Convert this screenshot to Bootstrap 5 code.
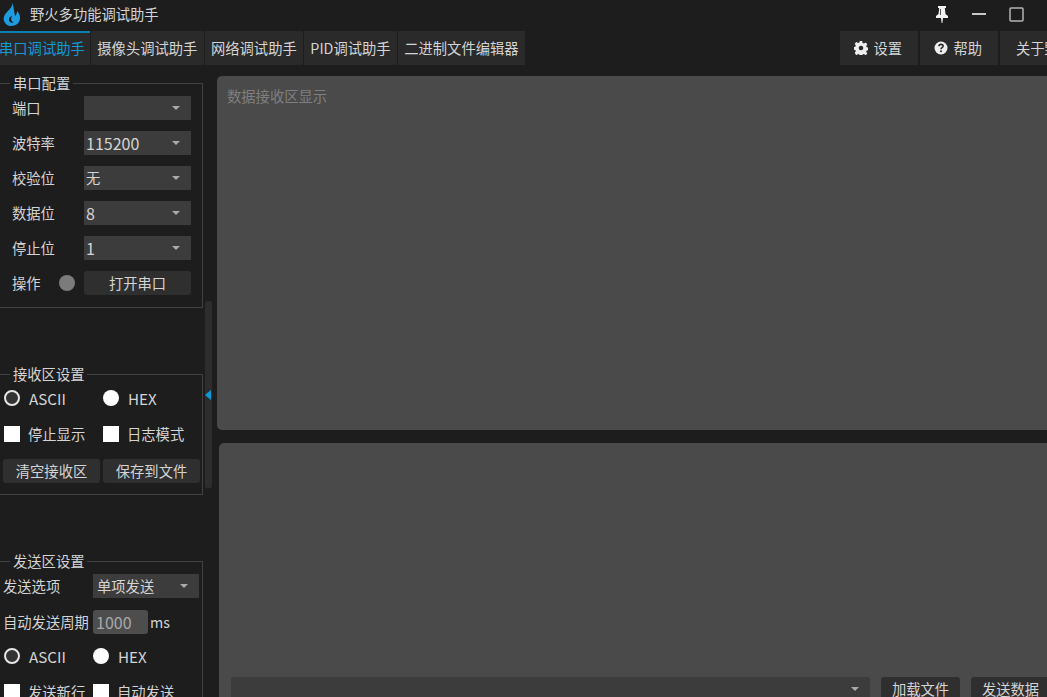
<!DOCTYPE html>
<html lang="zh-CN">
<head>
    <meta charset="UTF-8">
    <meta name="viewport" content="width=device-width, initial-scale=1.0">
    <title>野火多功能调试助手</title>
    <link href="https://cdn.jsdelivr.net/npm/bootstrap@5.3.0/dist/css/bootstrap.min.css" rel="stylesheet">
    <style>
        html, body { height: 100%; overflow: hidden; }
        body { background: #1d1d1d; color: #d4d4d4; font-family: "Noto Sans CJK SC", "Noto Sans", sans-serif; font-size: 14.3px; line-height: 20px; }
        .app-shell { width: 1047px; height: 697px; overflow: hidden; }
        .title-bar { height: 31px; padding: 0 0 3px 2px; flex: none; }
        .app-name { margin-left: 9px; }
        .win-btns { gap: 22px; padding-right: 23px; }
        .tab-bar { height: 34px; gap: 1px; flex: none; }
        .tab-item { background: #2a2a2a; height: 34px; padding: 0 6.3px; white-space: nowrap; display: flex; align-items: center; flex: none; }
        .tab-on { color: #0f9ad6; width: 90px; padding-left: 0; text-indent: -1px; border-top: 2px solid #0b80b4; padding-bottom: 2px; }
        .tab-tool { width: 78px; padding-left: 13.5px; gap: 6px; margin-left: 1px; }
        .tab-last { width: 90px; padding-left: 16px; margin-left: 1px; margin-right: -43px; }
        .side-pane { width: 217px; flex: none; position: relative; padding-top: 9px; }
        .grp { width: 204px; margin-left: -1px; border: 1px solid #414141; padding: 0; min-width: 0; }
        .grp legend { float: none; width: auto; font-size: 14.3px; padding: 0 3px; line-height: 18px; margin-bottom: -2px; }
        .grp-port { height: 234px; margin-bottom: 57px; padding: 0 11px 0 12px; }
        .grp-port legend { margin-left: -2px; margin-bottom: -1.5px; }
        .grp-recv { height: 130px; margin-bottom: 57px; padding: 0 3px 0 4px; }
        .grp-recv legend { margin-left: 6px; }
        .grp-send { height: 150px; padding: 0 3px 0 3px; }
        .grp-send legend { margin-left: 7px; }
        .field-row { height: 35px; }
        .tall-row { height: 36px; }
        .lift-one { margin-top: -1px; }
        .lift-two { margin-top: -2px; }
        .drop-one { margin-top: 1px; }
        .field-label { width: 72px; flex: none; }
        .combo { background: #3c3c3c; height: 24px; padding: 0 11px 0 2px; display: flex; align-items: center; flex: 1; }
        .combo::after { content: ""; border-left: 4px solid transparent; border-right: 4px solid transparent; border-top: 4px solid #aaa; flex: none; margin-left: auto; }
        .combo-wide { padding-left: 4px; }
        .num-text { font-size: 16px; }
        .word-text { font-size: 15.2px; }
        .led { width: 16px; height: 16px; border-radius: 50%; background: #7b7b7b; margin: 0 9px 0 -25px; flex: none; }
        .tool-btn { background: #2f2f2f; color: #d4d4d4; height: 24px; border-radius: 3px; display: flex; align-items: center; justify-content: center; flex: none; }
        .recv-btns { gap: 3px; margin: 7px 0 0 -1px; }
        .recv-btn { width: 97px; }
        .send-btn { width: 79px; }
        .radio-dot { width: 16px; height: 16px; border-radius: 50%; background: #fff; flex: none; margin-right: 9px; }
        .radio-on { background: #333; border: 2px solid #e6e6e6; }
        .check-box { width: 16px; height: 16px; background: #fff; flex: none; margin-right: 8px; }
        .opt-cell { width: 99px; flex: none; display: flex; align-items: center; }
        .send-opt { width: 89px; margin-left: 1px; }
        .send-label { width: 90px; flex: none; }
        .num-box { background: #4d4d4d; color: #a8a8a8; width: 55px; height: 24px; border-radius: 3px; padding-left: 3px; display: flex; align-items: center; flex: none; }
        .ms-unit { margin-left: 2px; }
        .side-scroll { position: absolute; left: 205px; top: 236px; width: 7px; height: 187px; background: #2d2d2d; border-radius: 2px; }
        .side-arrow { position: absolute; left: 205px; top: 325px; border-top: 5px solid transparent; border-bottom: 5px solid transparent; border-right: 6px solid #0f9ad6; }
        .main-pane { padding-top: 11px; width: 830px; flex: none; }
        .data-panel { background: #4a4a4a; border-radius: 5px; }
        .recv-panel { height: 354px; width: 840px; padding: 10px; color: #7f7f7f; }
        .send-panel { height: 264px; width: 838px; margin: 13px 0 0 2px; padding-top: 234px; padding-left: 12px; gap: 11px; }
        .send-input { background: #3c3c3c; width: 639px; height: 24px; flex: none; justify-content: flex-end; padding-right: 11px; display: flex; align-items: center; border-radius: 3px; }
        .send-input::after { content: ""; border-left: 4px solid transparent; border-right: 4px solid transparent; border-top: 4px solid #aaa; }
    </style>
</head>
<body>
    <div class="app-shell d-flex flex-column">
        <!-- title bar -->
        <div class="title-bar d-flex align-items-center justify-content-between">
            <div class="d-flex align-items-center">
                <svg width="19" height="24" viewBox="0 0 19 24"><path fill="#1f9ce0" d="M10 0c1 4-2 7-5 10-3 3-4 6-3 9 1 3 4 5 7 5 5 0 9-3 9-8 0-3-1-5-3-7 0 3-1 4-2 5-1-4-1-9-3-14z"/><path fill="#1d1d1d" d="M10 14c-3 1-4 4-2 6 1 1 3 1 4 0-2 0-4-2-2-6z"/></svg>
                <span class="app-name">野火多功能调试助手</span>
            </div>
            <div class="win-btns d-flex align-items-center">
                <svg width="14" height="17" viewBox="0 0 14 17"><path fill="#f2f2f2" d="M3 0h8v2H9.800l.7 6L13 10v2H8l-.6 5h-.8L6 12H1v-2l2.500-2 .7-6H3z"/><path fill="none" stroke="#555" d="M5.500 3v6"/></svg>
                <svg width="16" height="12" viewBox="0 0 16 12"><path fill="none" stroke="#c8c8c8" stroke-width="2" d="M1 6h14"/></svg>
                <svg width="15" height="15" viewBox="0 0 15 15"><rect x="1" y="1" width="13" height="13" rx="1" fill="none" stroke="#b4b4b4" stroke-width="1.500"/></svg>
            </div>
        </div>

        <!-- tabs -->
        <div class="tab-bar d-flex">
            <div class="tab-item tab-on">串口调试助手</div>
            <div class="tab-item">摄像头调试助手</div>
            <div class="tab-item">网络调试助手</div>
            <div class="tab-item">PID调试助手</div>
            <div class="tab-item">二进制文件编辑器</div>
            <div class="flex-grow-1"></div>
            <div class="tab-item tab-tool">
                <svg width="14" height="14" viewBox="0 0 14 14"><path fill="#eee" fill-rule="evenodd" d="M5.800 0h2.400l.4 2 1.300.6 1.800-1.100 1.600 1.700-1.100 1.700.5 1.300 2 .5v2.400l-2 .4-.5 1.300 1.100 1.800-1.600 1.600-1.800-1.100-1.300.5-.4 2H5.800l-.4-2-1.300-.5-1.800 1.100L.7 12.100l1.100-1.800-.5-1.300-2-.4V6.200l2-.5.5-1.300L.7 2.700l1.600-1.700 1.800 1.100 1.300-.6zM7 4.700a2.300 2.300 0 1 0 0 4.600 2.300 2.300 0 0 0 0-4.600z"/></svg>
                设置
            </div>
            <div class="tab-item tab-tool">
                <svg width="14" height="14" viewBox="0 0 14 14"><circle cx="7" cy="7" r="6.500" fill="#eee"/><path fill="none" stroke="#2a2a2a" stroke-width="1.600" d="M5 5.300C5 4 6 3.400 7 3.400c1.200 0 2.100.8 2.100 1.800 0 1.500-2.100 1.500-2.100 3.100"/><circle cx="7" cy="10.300" r="1" fill="#2a2a2a"/></svg>
                帮助
            </div>
            <div class="tab-item tab-last">关于野火</div>
        </div>

        <div class="d-flex flex-grow-1">
            <!-- left settings column -->
            <div class="side-pane">
                <fieldset class="grp grp-port">
                    <legend>串口配置</legend>
                    <div class="field-row d-flex align-items-center"><span class="field-label">端口</span><span class="combo"></span></div>
                    <div class="field-row d-flex align-items-center"><span class="field-label">波特率</span><span class="combo num-text">115200</span></div>
                    <div class="field-row d-flex align-items-center"><span class="field-label">校验位</span><span class="combo">无</span></div>
                    <div class="field-row d-flex align-items-center"><span class="field-label">数据位</span><span class="combo num-text">8</span></div>
                    <div class="field-row d-flex align-items-center"><span class="field-label">停止位</span><span class="combo num-text">1</span></div>
                    <div class="field-row d-flex align-items-center"><span class="field-label">操作</span><span class="led"></span><span class="tool-btn flex-grow-1">打开串口</span></div>
                </fieldset>

                <fieldset class="grp grp-recv">
                    <legend>接收区设置</legend>
                    <div class="d-flex align-items-center tall-row lift-one">
                        <div class="opt-cell word-text"><span class="radio-dot radio-on"></span>ASCII</div>
                        <div class="opt-cell word-text"><span class="radio-dot"></span>HEX</div>
                    </div>
                    <div class="d-flex align-items-center tall-row">
                        <div class="opt-cell"><span class="check-box"></span>停止显示</div>
                        <div class="opt-cell"><span class="check-box"></span>日志模式</div>
                    </div>
                    <div class="d-flex recv-btns">
                        <span class="tool-btn recv-btn">清空接收区</span>
                        <span class="tool-btn recv-btn">保存到文件</span>
                    </div>
                </fieldset>

                <fieldset class="grp grp-send">
                    <legend>发送区设置</legend>
                    <div class="d-flex align-items-center tall-row">
                        <span class="send-label">发送选项</span>
                        <span class="combo combo-wide">单项发送</span>
                    </div>
                    <div class="d-flex align-items-center tall-row">
                        <span class="send-label">自动发送周期</span>
                        <span class="num-box num-text">1000</span>
                        <span class="ms-unit">ms</span>
                    </div>
                    <div class="d-flex align-items-center field-row lift-two">
                        <div class="opt-cell send-opt word-text"><span class="radio-dot radio-on"></span>ASCII</div>
                        <div class="opt-cell word-text"><span class="radio-dot"></span>HEX</div>
                    </div>
                    <div class="d-flex align-items-center field-row drop-one">
                        <div class="opt-cell send-opt"><span class="check-box"></span>发送新行</div>
                        <div class="opt-cell"><span class="check-box"></span>自动发送</div>
                    </div>
                </fieldset>
                <div class="side-scroll"></div>
                <div class="side-arrow"></div>
            </div>

            <!-- data panels -->
            <div class="main-pane">
                <div class="data-panel recv-panel">数据接收区显示</div>
                <div class="data-panel send-panel d-flex align-items-start">
                    <div class="send-input"></div>
                    <span class="tool-btn send-btn">加载文件</span>
                    <span class="tool-btn send-btn">发送数据</span>
                </div>
            </div>
        </div>
    </div>
    <script src="https://cdn.jsdelivr.net/npm/bootstrap@5.3.0/dist/js/bootstrap.bundle.min.js"></script>
</body>
</html>
